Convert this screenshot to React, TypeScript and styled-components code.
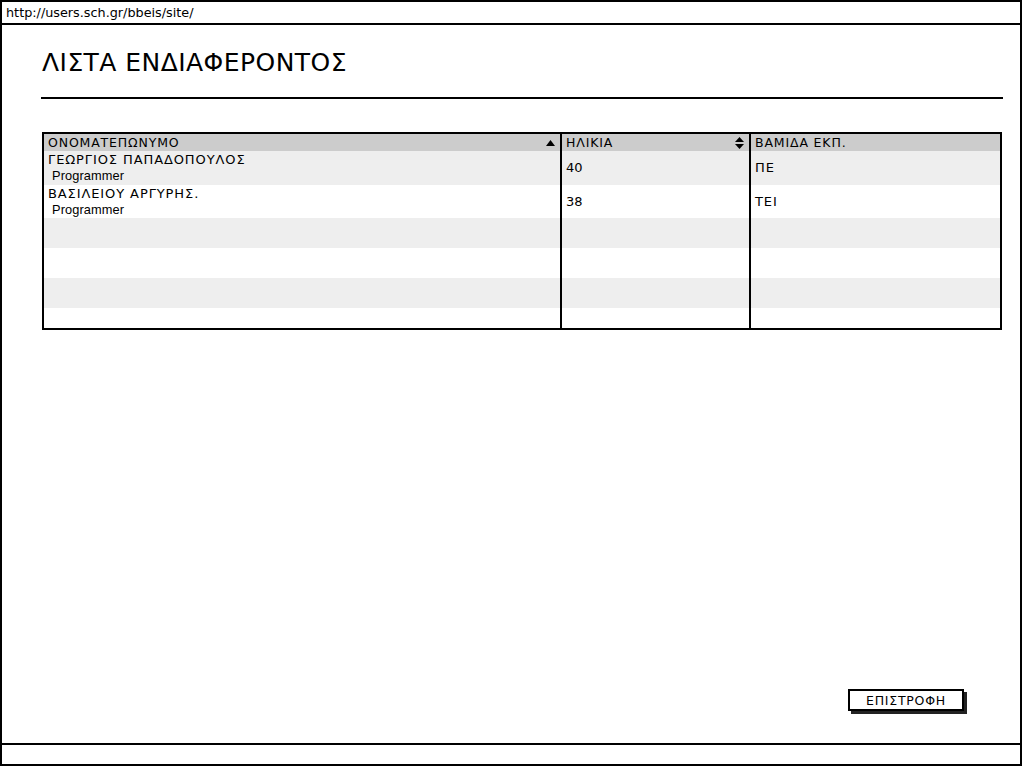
import React from "react";
import styled, { createGlobalStyle } from "styled-components";

const Global = createGlobalStyle`
  html, body { margin: 0; padding: 0; background: #fff; }
  body { font-family: "DejaVu Sans", "Liberation Sans", sans-serif; color: #000; }
`;

const Frame = styled.div`
  box-sizing: border-box;
  width: 1022px;
  height: 766px;
  border: 2px solid #000;
  display: flex;
  flex-direction: column;
`;

const UrlBar = styled.div`
  height: 21px;
  border-bottom: 2px solid #000;
  display: flex;
  align-items: center;
  padding-left: 4px;
  font-size: 12.8px;
`;

const Content = styled.div`
  flex: 1;
  display: flex;
  flex-direction: column;
  padding: 0 0 0 40px;
`;

const Title = styled.h1`
  margin: 23px 0 0 0;
  font-weight: normal;
  font-size: 25px;
  line-height: 29px;
  letter-spacing: 0.45px;
`;

const Rule = styled.div`
  margin: 20px 0 0 -1px;
  width: 962px;
  height: 2px;
  background: #000;
`;

const Table = styled.div`
  margin-top: 33px;
  width: 960px;
  box-sizing: border-box;
  border: 2px solid #000;
  display: flex;
  flex-direction: column;
`;

const Row = styled.div<{ $bg: string; $h: number }>`
  display: grid;
  grid-template-columns: 516px 189px 1fr;
  height: ${(p) => p.$h}px;
  background: ${(p) => p.$bg};
`;

const Cell = styled.div<{ $divider?: boolean }>`
  border-left: ${(p) => (p.$divider ? "2px solid #000" : "none")};
  padding-left: 4px;
  display: flex;
  flex-direction: column;
  justify-content: center;
  font-size: 13px;
  line-height: 16px;
  letter-spacing: 0.9px;
  overflow: hidden;
`;

const HeadCell = styled(Cell)`
  flex-direction: row;
  align-items: center;
  justify-content: space-between;
  padding-right: 5px;
  font-size: 12.5px;
  line-height: 15px;
  letter-spacing: 0.85px;
`;

const NameCell = styled(Cell)`
  justify-content: flex-start;
  padding-top: 1px;
`;

const Sub = styled.span`
  padding-left: 4px;
  font-family: "Liberation Sans", "DejaVu Sans", sans-serif;
  font-size: 12.8px;
  letter-spacing: 0.1px;
`;

const Num = styled.span`
  letter-spacing: 0;
`;

const Footer = styled.div`
  flex: 1;
  display: flex;
  justify-content: flex-end;
  align-items: flex-end;
  padding: 0 56px 32px 0;
`;

const Button = styled.button`
  box-sizing: border-box;
  width: 116px;
  height: 22px;
  border: 2px solid #000;
  background: #fff;
  box-shadow: 3px 3px 0 #222;
  font-family: "DejaVu Sans", "Liberation Sans", sans-serif;
  font-size: 12.5px;
  letter-spacing: 0.75px;
  padding: 0;
  color: #000;
`;

const BottomBar = styled.div`
  height: 19px;
  border-top: 2px solid #000;
`;

const UpArrow = () => (
  <svg width="9" height="6" viewBox="0 0 9 6">
    <path d="M0 6 L4.5 0 L9 6 Z" fill="#000" />
  </svg>
);

const SortArrows = () => (
  <svg width="9" height="12" viewBox="0 0 9 12">
    <path d="M0 5 L4.5 0 L9 5 Z" fill="#000" />
    <path d="M0 7 L4.5 12 L9 7 Z" fill="#000" />
  </svg>
);

const rows = [
  { name: "ΓΕΩΡΓΙΟΣ ΠΑΠΑΔΟΠΟΥΛΟΣ", role: "Programmer", age: "40", edu: "ΠΕ", h: 34 },
  { name: "ΒΑΣΙΛΕΙΟΥ ΑΡΓΥΡΗΣ.", role: "Programmer", age: "38", edu: "ΤΕΙ", h: 33 },
  { h: 30 },
  { h: 30 },
  { h: 30 },
  { h: 20 },
];

export default function App() {
  return (
    <>
      <Global />
      <Frame>
        <UrlBar>http://users.sch.gr/bbeis/site/</UrlBar>
        <Content>
          <Title>ΛΙΣΤΑ ΕΝΔΙΑΦΕΡΟΝΤΟΣ</Title>
          <Rule />
          <Table>
            <Row $bg="#cccccc" $h={17}>
              <HeadCell>
                <span>ΟΝΟΜΑΤΕΠΩΝΥΜΟ</span>
                <UpArrow />
              </HeadCell>
              <HeadCell $divider>
                <span>ΗΛΙΚΙΑ</span>
                <SortArrows />
              </HeadCell>
              <HeadCell $divider>
                <span>ΒΑΜΙΔΑ ΕΚΠ.</span>
              </HeadCell>
            </Row>
            {rows.map((r, i) => (
              <Row key={i} $bg={i % 2 === 0 ? "#eeeeee" : "#ffffff"} $h={r.h}>
                <NameCell>
                  {r.name && <span>{r.name}</span>}
                  {r.role && <Sub>{r.role}</Sub>}
                </NameCell>
                <Cell $divider>{r.age && <Num>{r.age}</Num>}</Cell>
                <Cell $divider>{r.edu}</Cell>
              </Row>
            ))}
          </Table>
          <Footer>
            <Button>ΕΠΙΣΤΡΟΦΗ</Button>
          </Footer>
        </Content>
        <BottomBar />
      </Frame>
    </>
  );
}
